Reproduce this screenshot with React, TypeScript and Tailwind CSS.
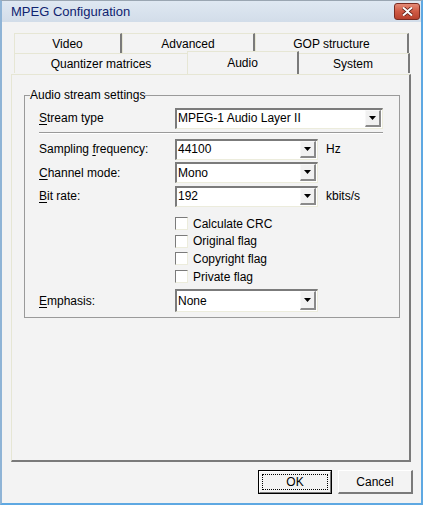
import React from "react";

//
// ==========================================================
// SMALL WIN32-STYLE PIECES
// ==========================================================
function Mnemonic({ text, index }: { text: string; index: number }) {
  return (
    <span>
      {text.slice(0, index)}
      <span className="underline underline-offset-[2px]">{text[index]}</span>
      {text.slice(index + 1)}
    </span>
  );
}

function DropButton() {
  return (
    <div className="w-[16px] h-full bg-[#f1f1f1] border-t border-l border-[#f8f8f8] border-r-2 border-b-2 border-r-[#8a8a8a] border-b-[#8a8a8a] flex items-center justify-center">
      <svg width="7" height="4" viewBox="0 0 7 4">
        <path d="M0 0h7L3.5 4z" fill="#000" />
      </svg>
    </div>
  );
}

function Combo({ value, width, height = 21 }: { value: string; width: number; height?: number }) {
  return (
    <div
      className="flex bg-white border-t-2 border-l-2 border-[#7b7b7b] border-r border-b border-r-[#ececdc] border-b-[#ececdc] pr-[1px] pb-[1px]"
      style={{ width, height }}
    >
      <div className="flex-1 flex items-center pl-[1px] text-black">{value}</div>
      <DropButton />
    </div>
  );
}

function CheckRow({ label }: { label: string }) {
  return (
    <div className="flex items-center h-[17.6px]">
      <div className="w-[13px] h-[13px] bg-white border-t border-l border-[#7b7b7b] border-r border-b border-r-[#ececdc] border-b-[#ececdc]" />
      <span className="ml-[5px]">{label}</span>
    </div>
  );
}

function Tab({ label, width, selected }: { label: string; width: number; selected?: boolean }) {
  if (selected) {
    return (
      <div
        className="relative z-10 -mx-[2px] -mt-[2px] h-[23px] bg-[#f3f3f3] border-t border-l border-[#e6e6d4] border-r-2 border-r-[#7a7a7a] flex items-start justify-center pt-[2px]"
        style={{ width: width + 4 }}
      >
        {label}
      </div>
    );
  }
  return (
    <div
      className="h-[20px] border-t border-l border-[#e6e6d4] border-r-2 border-r-[#7a7a7a] flex items-center justify-center pt-[1px]"
      style={{ width }}
    >
      {label}
    </div>
  );
}

//
// ==========================================================
// PAGE
// ==========================================================
export default function App() {
  return (
    <div className="w-[423px] h-[505px] bg-[#f3f3f3] border-l-2 border-r-2 border-b-2 border-t border-l-[#8fb4d6] border-r-[#5ea8e2] border-b-[#5ea8e2] border-t-[#9aa6b2] font-['Liberation_Sans',Arial,sans-serif] text-[12px] text-black flex flex-col overflow-hidden">
      {/* TITLE BAR */}
      <div className="h-[21px] shrink-0 bg-gradient-to-b from-[#dfe8f2] to-[#d2dde9] flex items-center pl-[9px] pr-[1px]">
        <span className="text-[13px] text-[#0f2370] flex-1">MPEG Configuration</span>
        <div className="w-[26px] h-[17px] rounded-[3px] border border-[#7a2c22] bg-gradient-to-b from-[#e48a76] via-[#cf5a44] to-[#b8422e] flex items-center justify-center">
          <svg width="11" height="9" viewBox="0 0 11 9">
            <path
              d="M1 0.5L5.5 4.2 10 0.5M1 8.5L5.5 4.8 10 8.5"
              stroke="#5a1a12"
              strokeWidth="3.4"
              fill="none"
            />
            <path
              d="M1 0.5L5.5 4.2 10 0.5M1 8.5L5.5 4.8 10 8.5"
              stroke="#fff"
              strokeWidth="2"
              fill="none"
            />
          </svg>
        </div>
      </div>

      {/* BODY */}
      <div className="flex-1 flex flex-col pl-[9px] pr-[8px]">
        {/* TABS */}
        <div className="mt-[11px] pl-[3px] flex flex-col">
          <div className="flex">
            <Tab label="Video" width={108} />
            <Tab label="Advanced" width={133} />
            <Tab label="GOP structure" width={154} />
          </div>
          <div className="flex">
            <Tab label="Quantizer matrices" width={175} />
            <Tab label="Audio" width={108} selected />
            <Tab label="System" width={113} />
          </div>
        </div>

        {/* PANEL */}
        <div className="w-[400px] h-[388px] border-t border-l border-[#e6e6d4] border-r-2 border-b-2 border-r-[#7a7a7a] border-b-[#7a7a7a] pl-[12px] pt-[14px]">
          <fieldset className="w-[376px] h-[229px] border border-[#9a9a9a] p-0">
            <legend className="ml-[5px] px-0 leading-[13px]">Audio stream settings</legend>

            <div className="pl-[14px]">
              {/* STREAM TYPE */}
              <div className="flex items-center mt-[5px] h-[22px]">
                <div className="w-[136px]">
                  <Mnemonic text="Stream type" index={0} />
                </div>
                <Combo value="MPEG-1 Audio Layer II" width={208} />
              </div>

              <div className="w-[344px] mt-[3px] h-[2px] border-t border-[#9a9a9a] border-b border-b-white" />

              {/* SAMPLING */}
              <div className="flex items-center mt-[4px] h-[22px]">
                <div className="w-[136px]">
                  <Mnemonic text="Sampling frequency:" index={9} />
                </div>
                <Combo value="44100" width={143} />
                <span className="ml-[8px]">Hz</span>
              </div>
              <div className="flex items-center mt-[1.5px] h-[22px]">
                <div className="w-[136px]">
                  <Mnemonic text="Channel mode:" index={0} />
                </div>
                <Combo value="Mono" width={143} />
              </div>
              <div className="flex items-center mt-[1.5px] h-[22px]">
                <div className="w-[136px]">
                  <Mnemonic text="Bit rate:" index={0} />
                </div>
                <Combo value="192" width={143} />
                <span className="ml-[8px]">kbits/s</span>
              </div>

              {/* FLAGS */}
              <div className="flex flex-col ml-[136px] mt-[8px]">
                <CheckRow label="Calculate CRC" />
                <CheckRow label="Original flag" />
                <CheckRow label="Copyright flag" />
                <CheckRow label="Private flag" />
              </div>

              {/* EMPHASIS */}
              <div className="flex items-center mt-[4px] h-[23px]">
                <div className="w-[136px]">
                  <Mnemonic text="Emphasis:" index={0} />
                </div>
                <Combo value="None" width={143} height={23} />
              </div>
            </div>
          </fieldset>
        </div>

        {/* BUTTONS */}
        <div className="flex justify-end mt-[8px] gap-[6px]">
          <div className="w-[74px] h-[24px] border border-black">
            <div className="w-full h-full border-t border-l border-white border-r border-b border-r-[#7a7a7a] border-b-[#7a7a7a] p-[2px]">
              <div className="w-full h-full border border-dotted border-black flex items-center justify-center">
                OK
              </div>
            </div>
          </div>
          <div className="w-[75px] h-[24px] border-t border-l border-white border-r-2 border-b-2 border-r-[#7a7a7a] border-b-[#7a7a7a] flex items-center justify-center">
            Cancel
          </div>
        </div>
      </div>
    </div>
  );
}
